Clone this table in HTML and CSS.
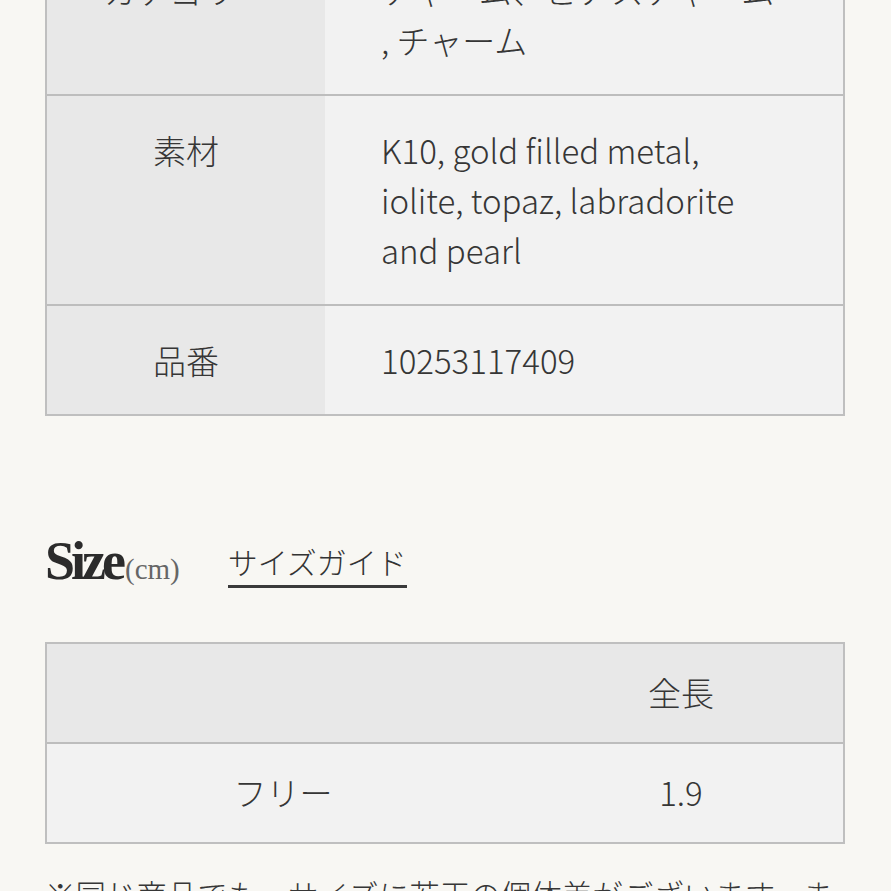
FILE: index.html
```html
<!DOCTYPE html>
<html lang="ja">
<head>
<meta charset="utf-8">
<title>商品詳細</title>
<link rel="stylesheet" href="styles.css">
</head>
<body>
<main class="page">
  <section class="spec">
    <div class="spec-row spec-row--first">
      <div class="spec-label">カテゴリー</div>
      <div class="spec-value"><span class="nowrap">チャーム、ピアスチャーム</span><br>, チャーム</div>
    </div>
    <div class="spec-row">
      <div class="spec-label">素材</div>
      <div class="spec-value">K10, gold filled metal, iolite, topaz, labradorite and pearl</div>
    </div>
    <div class="spec-row spec-row--last">
      <div class="spec-label">品番</div>
      <div class="spec-value">10253117409</div>
    </div>
  </section>

  <section class="size-head">
    <h2 class="size-title">Size<span class="size-unit">(cm)</span></h2>
    <a class="size-guide" href="#">サイズガイド</a>
  </section>

  <section class="size-table">
    <div class="size-row size-row--head">
      <div class="size-cell"></div>
      <div class="size-cell">全長</div>
    </div>
    <div class="size-row">
      <div class="size-cell">フリー</div>
      <div class="size-cell">1.9</div>
    </div>
  </section>

  <p class="note">※同じ商品でも、サイズに若干の個体差がございます。また、商品によって計測方法が異なります。</p>
</main>
</body>
</html>
```

FILE: styles.css
```css
html, body {
  margin: 0;
  padding: 0;
}

body {
  background: #f8f7f3;
  color: #363636;
  font-family: "Noto Sans CJK JP", "Noto Sans", sans-serif;
  font-weight: 300;
  overflow: hidden;
}

.page {
  width: 800px;
  margin: -66px 0 0 45px;
}

.nowrap {
  white-space: nowrap;
}

/* spec table */
.spec {
  border: 2px solid #bfbfbf;
  background: #f2f2f2;
}

.spec-row {
  display: grid;
  grid-template-columns: 278px 1fr;
  border-bottom: 2px solid #bdbdbd;
  font-size: 33px;
  line-height: 50px;
}

.spec-row--last {
  border-bottom: 0;
}

.spec-label {
  background: #e8e8e8;
  text-align: center;
  padding: 29px 0;
}

.spec-value {
  background: #f2f2f2;
  padding: 29px 58px 29px 56px;
}

/* size heading */
.size-head {
  display: flex;
  align-items: flex-end;
  gap: 48px;
  margin-top: 125px;
}

.size-title {
  margin: 0;
  font-family: "Liberation Serif", "Times New Roman", serif;
  font-weight: 700;
  font-size: 54px;
  line-height: 38px;
  letter-spacing: -4px;
  color: #2b2b2b;
}

.size-unit {
  font-weight: 400;
  font-size: 29px;
  letter-spacing: 0;
  margin-left: 3px;
  color: #666666;
}

.size-guide {
  color: #333333;
  text-decoration: none;
  font-size: 30px;
  line-height: 40px;
  padding-bottom: 4px;
  border-bottom: 3px solid #3a3a3a;
}

/* size table */
.size-table {
  margin-top: 54px;
  border: 2px solid #bfbfbf;
}

.size-row {
  display: grid;
  grid-template-columns: 472px 1fr;
  background: #f2f2f2;
  font-size: 33px;
  line-height: 50px;
}

.size-row--head {
  background: #e8e8e8;
  border-bottom: 2px solid #bdbdbd;
}

.size-cell {
  text-align: center;
  padding: 23px 0 25px;
  min-height: 50px;
}

.note {
  margin: 26px 0 0;
  font-size: 30.5px;
  line-height: 48px;
}
```
